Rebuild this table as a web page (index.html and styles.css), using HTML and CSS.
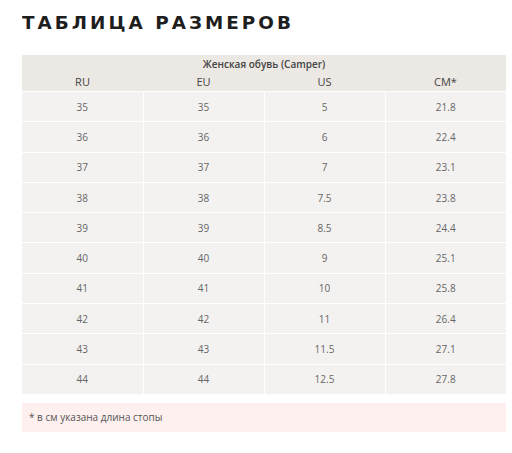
FILE: index.html
```html
<!DOCTYPE html>
<html lang="ru">
<head>
<meta charset="utf-8">
<link rel="stylesheet" href="styles.css">
</head>
<body>
<div class="page">
  <h1 class="title">ТАБЛИЦА РАЗМЕРОВ</h1>
  <table class="sizes">
    <thead>
      <tr class="cap-row"><th colspan="4" class="cap">Женская обувь (Camper)</th></tr>
      <tr class="head-row"><th>RU</th><th>EU</th><th>US</th><th>CM*</th></tr>
    </thead>
    <tbody>
      <tr><td>35</td><td>35</td><td>5</td><td>21.8</td></tr>
      <tr><td>36</td><td>36</td><td>6</td><td>22.4</td></tr>
      <tr><td>37</td><td>37</td><td>7</td><td>23.1</td></tr>
      <tr><td>38</td><td>38</td><td>7.5</td><td>23.8</td></tr>
      <tr><td>39</td><td>39</td><td>8.5</td><td>24.4</td></tr>
      <tr><td>40</td><td>40</td><td>9</td><td>25.1</td></tr>
      <tr><td>41</td><td>41</td><td>10</td><td>25.8</td></tr>
      <tr><td>42</td><td>42</td><td>11</td><td>26.4</td></tr>
      <tr><td>43</td><td>43</td><td>11.5</td><td>27.1</td></tr>
      <tr><td>44</td><td>44</td><td>12.5</td><td>27.8</td></tr>
    </tbody>
  </table>
  <div class="note">* в см указана длина стопы</div>
</div>
</body>
</html>
```

FILE: styles.css
```css
html, body {
  margin: 0;
  padding: 0;
  background: #ffffff;
}

.page {
  padding: 14px 6px 0 22px;
  font-family: "Open Sans", "Noto Sans", sans-serif;
}

.title {
  margin: 0;
  width: max-content;
  font-family: "DejaVu Sans", sans-serif;
  font-weight: bold;
  font-size: 17px;
  line-height: 19px;
  letter-spacing: 2.8px;
  color: #1e1e1e;
  transform: scaleX(1.08);
  transform-origin: left center;
}

.sizes {
  margin-top: 22px;
  width: 484px;
  border-collapse: collapse;
  table-layout: fixed;
}

.sizes thead {
  background: #ece8e3;
}

.sizes th {
  font-weight: 600;
  color: #444444;
  padding: 0;
  text-align: center;
}

.cap-row .cap {
  height: 17px;
  font-size: 10px;
  line-height: 17px;
  padding-top: 1px;
}

.head-row th {
  height: 17px;
  font-size: 11px;
  line-height: 17px;
  padding-bottom: 1px;
  font-weight: 500;
}

.sizes td {
  background: #f3f2f1;
  color: #666666;
  font-size: 10px;
  text-align: center;
  height: 29.3px;
  padding: 0;
  border: 1px solid #ffffff;
  border-bottom: 0;
}

.sizes tr td:first-child {
  border-left: 0;
}

.sizes tr td:last-child {
  border-right: 0;
}

.note {
  margin-top: 9px;
  width: 477px;
  padding: 0 0 0 7px;
  height: 29px;
  line-height: 28px;
  background: #fdf0ef;
  color: #555555;
  font-size: 10px;
}
```
